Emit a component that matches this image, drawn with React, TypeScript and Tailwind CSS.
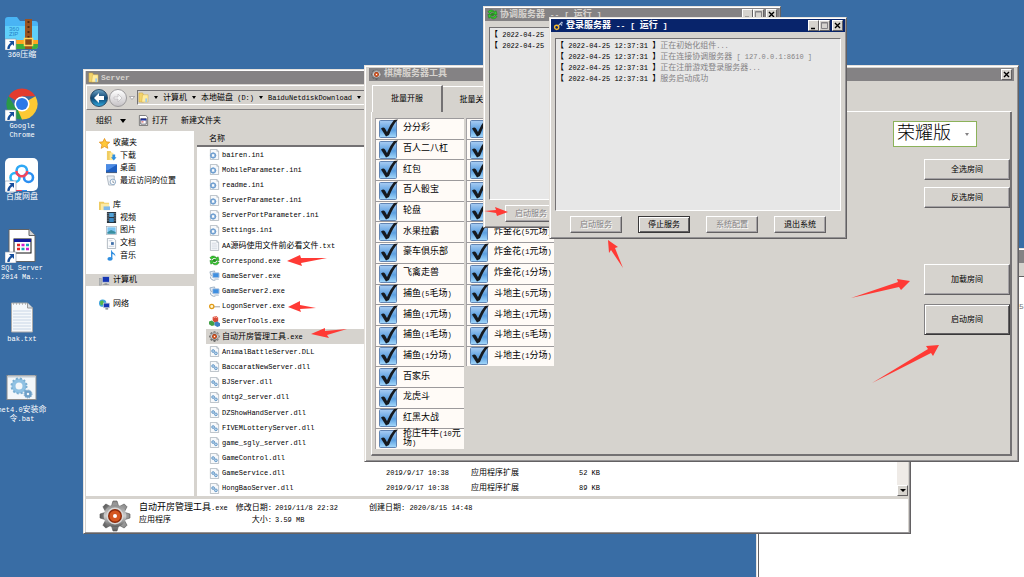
import { useState, type ReactNode } from "react"
import clsx from "clsx"

type FileKind = "ini" | "txt" | "correspond" | "server" | "key" | "tools" | "gear" | "dll"

interface FileItem {
  name: string
  kind: FileKind
  details?: [date: string, type: string, size: string]
}

const files: FileItem[] = [
  { name: "bairen.ini", kind: "ini" },
  { name: "MobileParameter.ini", kind: "ini" },
  { name: "readme.ini", kind: "ini" },
  { name: "ServerParameter.ini", kind: "ini" },
  { name: "ServerPortParameter.ini", kind: "ini" },
  { name: "Settings.ini", kind: "ini" },
  { name: "AA源码使用文件前必看文件.txt", kind: "txt" },
  { name: "Correspond.exe", kind: "correspond" },
  { name: "GameServer.exe", kind: "server" },
  { name: "GameServer2.exe", kind: "server" },
  { name: "LogonServer.exe", kind: "key" },
  { name: "ServerTools.exe", kind: "tools" },
  { name: "自动开房管理工具.exe", kind: "gear" },
  { name: "AnimalBattleServer.DLL", kind: "dll" },
  { name: "BaccaratNewServer.dll", kind: "dll" },
  { name: "BJServer.dll", kind: "dll" },
  { name: "dntg2_server.dll", kind: "dll" },
  { name: "DZShowHandServer.dll", kind: "dll" },
  { name: "FIVEMLotteryServer.dll", kind: "dll" },
  { name: "game_sgly_server.dll", kind: "dll" },
  { name: "GameControl.dll", kind: "dll" },
  { name: "GameService.dll", kind: "dll", details: ["2019/9/17 10:38", "应用程序扩展", "52 KB"] },
  { name: "HongBaoServer.dll", kind: "dll", details: ["2019/9/17 10:38", "应用程序扩展", "89 KB"] },
]

const games = [
  "分分彩", "百人二八杠", "红包", "百人骰宝", "轮盘", "水果拉霸", "豪车俱乐部", "飞禽走兽",
  "捕鱼(5毛场)", "捕鱼(1元场)", "捕鱼(1毛场)", "捕鱼(1分场)", "百家乐", "龙虎斗", "红黑大战", "抢庄牛牛(10元场)",
  "", "", "", "", "", "炸金花(5元场)", "炸金花(1元场)", "炸金花(1分场)",
  "斗地主(5元场)", "斗地主(1元场)", "斗地主(5毛场)", "斗地主(1分场)",
]

const logs = ["正在初始化组件...", "正在连接协调服务器 [ 127.0.0.1:8610 ]", "正在注册游戏登录服务器...", "服务启动成功"]

const RAISED = "border border-t-white border-l-white border-r-[#636163] border-b-[#636163] bg-[#d6d3ce]"
const SUNKEN = "border border-t-[#737173] border-l-[#737173] border-r-white border-b-white"

// Latin runs are set one size down so that they are half as wide as the Chinese ones
function T({ children }: { children: string }) {
  return (
    <>
      {children.split(/([\x20-\x7e]+)/).map((part, i) =>
        i % 2 ? <span key={i} className="text-[7px] leading-none [white-space-collapse:preserve]">{part}</span> : part
      )}
    </>
  )
}

/* ---------- icons ---------- */

function Folder() {
  return (
    <svg viewBox="0 0 12 12" className="size-[11px] shrink-0">
      <path d="M1 1h4l1 2v8H1z" fill="#f3d36b" stroke="#c9a132" strokeWidth=".5" />
      <path d="M5 3h6v8H4z" fill="#ffec9f" stroke="#d3ae45" strokeWidth=".5" />
      <path d="M8 7h2v4H8z" fill="#9fc9e8" />
    </svg>
  )
}

function ToolGear({ className }: { className: string }) {
  return (
    <svg viewBox="-16 -16 32 32" className={className}>
      <defs>
        <linearGradient id="steel" x1="0" y1="0" x2="0" y2="1">
          <stop offset="0" stopColor="#8b8b8b" />
          <stop offset=".5" stopColor="#cfcfcf" />
          <stop offset="1" stopColor="#5c5c5c" />
        </linearGradient>
      </defs>
      {[0, 45, 90, 135].map((a) => (
        <path key={a} d="M-2-15h4l1.500 5v20l-1.500 5h-4l-1.500-5v-20z" fill="url(#steel)" stroke="#555" strokeWidth=".6" transform={`rotate(${a})`} />
      ))}
      <circle r="11.3" fill="url(#steel)" />
      <circle r="8.5" fill="#d8d8d8" />
      <circle r="7" fill="#8b2a0b" />
      <circle r="5.6" fill="#d5561f" />
      <circle r="2" fill="#fff" />
    </svg>
  )
}

function Page({ children }: { children?: ReactNode }) {
  return (
    <svg viewBox="0 0 12 12" className="size-[11px] shrink-0">
      <path d="M1.500.5h7l2 2v9h-9z" fill="#f7f9fb" stroke="#9aa4ae" strokeWidth=".7" />
      <path d="M8.500.5v2h2" fill="#cdd5dc" stroke="#9aa4ae" strokeWidth=".5" />
      {children}
    </svg>
  )
}

function FileIcon({ kind }: { kind: FileKind }) {
  switch (kind) {
    case "ini":
      return (
        <Page>
          <circle cx="4.500" cy="7" r="2.500" fill="none" stroke="#6f9fd0" strokeWidth="1.600" />
          <path d="M4.500 3.500v7M1 7h7" stroke="#6f9fd0" strokeWidth=".8" />
          <circle cx="4.500" cy="7" r="1.200" fill="#fff" />
        </Page>
      )
    case "txt":
      return <Page><path d="M3 3.500h5M3 5.500h6M3 7.500h6M3 9.500h6" stroke="#b9c3d2" strokeWidth=".6" /></Page>
    case "dll":
      return (
        <Page>
          <circle cx="4.500" cy="5.500" r="1.500" fill="#bcd8ee" stroke="#5f93c4" />
          <circle cx="7.500" cy="8" r="1.500" fill="#bcd8ee" stroke="#5f93c4" />
        </Page>
      )
    case "correspond":
      return <Recycle />
    case "server":
      return (
        <svg viewBox="0 0 12 12" className="size-[11px] shrink-0">
          <path d="M1 2l5-1 1 4-5 1z" fill="#dfe9f3" stroke="#7b93ad" strokeWidth=".7" />
          <rect x="4" y="3" width="7" height="5.500" rx=".7" fill="#3f8fe0" stroke="#b9cbe0" />
          <path d="M2 7a4 3 0 0 0 5 4" fill="none" stroke="#8aa0b6" />
          <path d="M6 9h4l1 2H6z" fill="#c8d4e0" />
        </svg>
      )
    case "key":
      return (
        <svg viewBox="0 0 12 12" className="size-[11px] shrink-0">
          <path d="M5 5.500h7v1.500H5z" fill="#b9b9b9" />
          <circle cx="3" cy="6" r="2.300" fill="#fff6d0" stroke="#e09a17" strokeWidth="1.400" />
        </svg>
      )
    case "tools":
      return (
        <svg viewBox="0 0 12 12" className="size-[11px] shrink-0">
          <path d="M4 1l4-1 2 2v4l-4 1-2-2z" fill="#d94b38" />
          <path d="M0 6l3-1 3 2v3l-3 1-3-2z" fill="#42a047" />
          <path d="M6 7l3-1 3 2v3l-3 1-3-2z" fill="#3f7fc4" />
          <path d="M5 2l2-1 2 1" stroke="#ffb1a5" fill="none" />
        </svg>
      )
    default:
      return <ToolGear className="size-[11px] shrink-0" />
  }
}

function Recycle() {
  return (
    <svg viewBox="0 0 12 12" className="size-[11px] shrink-0">
      <path d="M1 3c2-3 6-2 7 0l2-1 1 4H7l1-2C6 2 4 3 3 5z" fill="#35c92f" stroke="#14730f" strokeWidth=".5" />
      <path d="M11 8c-2 4-6 3-7 1l-2 1-1-4h4L4 8c2 2 4 1 5-1z" fill="#35c92f" stroke="#14730f" strokeWidth=".5" />
      <circle cx="6" cy="6" r="1.800" fill="#25911f" />
    </svg>
  )
}

function KeyIcon() {
  return (
    <svg viewBox="0 0 12 12" className="size-[11px] shrink-0">
      <path d="M5 7l5-5M8 4l2 2M9.500 2.500l1 1" stroke="#b5c3dc" strokeWidth="1.300" />
      <circle cx="4" cy="8" r="2.300" fill="none" stroke="#f4b92f" strokeWidth="1.500" />
    </svg>
  )
}

function Shortcut() {
  return (
    <g>
      <rect x="0" y="23" width="11" height="11" fill="#fff" stroke="#8795a8" strokeWidth=".6" />
      <path d="M4 25h5v5l-1.700-1.700Q4.500 30 4.500 33H2.300q0-4 3.500-6.200z" fill="#174f9c" />
    </g>
  )
}

function SideIcon({ name }: { name: string }) {
  const art: Record<string, ReactNode> = {
    收藏夹: <path d="M6 .5l1.700 3.700 4 .4-3 2.700.9 4L6 9.300l-3.600 2 .9-4-3-2.700 4-.4z" fill="#ffc83a" stroke="#e08a12" strokeWidth=".8" />,
    下载: <><path d="M1 1h4l1 2v8H1z" fill="#f0cd62" /><path d="M4 3h4v8H4z" fill="#ffe794" /><path d="M7 5h3v3h1.500L8.500 11.500 5.500 8H7z" fill="#2f8fe0" /></>,
    桌面: <><rect x="0" y="1.500" width="12" height="8.500" fill="#1f5fc0" /><path d="M0 1.500h12L2 8H0z" fill="#4b8be6" /><path d="M0 10h12v1H0z" fill="#27456f" /></>,
    最近访问的位置: <><path d="M1 1h8v10H3z" fill="#e8edf2" stroke="#8f9ba8" strokeWidth=".7" /><circle cx="7.500" cy="7.500" r="3" fill="#fff" stroke="#8aa6c4" /><path d="M7.500 6v2H9" stroke="#567" strokeWidth=".7" fill="none" /></>,
    库: <><path d="M0 2h5l1 1h5v8H0z" fill="#eecb62" /><path d="M2 4h9v7H2z" fill="#fdeaa5" /><path d="M5 7h7v4H5z" fill="#7fb8ea" /></>,
    视频: <><rect x="1" y="0" width="10" height="12" fill="#26303a" /><rect x="3.500" y="1" width="5" height="4.500" fill="#52a3d8" /><rect x="3.500" y="6.500" width="5" height="4.500" fill="#3b89c4" /><path d="M2.200 1v10M9.800 1v10" stroke="#dfe5ea" strokeWidth=".8" strokeDasharray="1 1" /></>,
    图片: <><rect x=".5" y="1.500" width="11" height="9" fill="#fff" stroke="#9aa7b4" strokeWidth=".7" /><rect x="1.500" y="2.500" width="9" height="7" fill="#7cc4f2" /><path d="M1.500 8l4-2.500 5 2v2h-9z" fill="#3a8fa0" /></>,
    文档: <><path d="M1.500 .5h7l2 2v9h-9z" fill="#fbfcfd" stroke="#9aa4ae" strokeWidth=".8" /><path d="M3 3h4M3 9h6" stroke="#a9b6c6" strokeWidth=".7" /><rect x="5.500" y="4.500" width="3" height="3" fill="#3e6ea8" /></>,
    音乐: <><path d="M6 0c0 3 5 3 4 7-.6-2-2-2.500-3-2.600V10H5.500V0z" fill="#2f8ee0" /><ellipse cx="4.300" cy="9.700" rx="2.800" ry="2" fill="#2f8ee0" /></>,
    计算机: <><rect x="0" y="4" width="2.500" height="7" fill="#b5b8bb" stroke="#83878a" strokeWidth=".5" /><rect x="3.500" y="1.500" width="8" height="6.500" fill="#1636b4" stroke="#c8cdd3" /><path d="M6 9h3v1h2v1H4v-1h2z" fill="#8e9499" /></>,
    网络: <><circle cx="4" cy="4.500" r="4" fill="#3fa4dd" /><path d="M1 3q3-3 4 0T2 7z" fill="#57b947" /><rect x="5" y="4.500" width="6.500" height="5" fill="#1636b4" stroke="#c8cdd3" strokeWidth=".8" /><path d="M7 10h3v1.500H7z" fill="#7c8287" /></>,
  }
  return <svg viewBox="0 0 12 12" className="size-[11px] shrink-0">{art[name]}</svg>
}

function CheckMark() {
  return (
    <svg viewBox="0 0 20 20" className="size-[20px]">
      <defs>
        <linearGradient id="box" x1="0" y1="0" x2="0" y2="1">
          <stop offset="0" stopColor="#a9cdf3" />
          <stop offset=".55" stopColor="#5b9fe0" />
          <stop offset="1" stopColor="#a5d9fb" />
        </linearGradient>
      </defs>
      <rect x="1.500" y="1.500" width="17" height="17" rx="1" fill="url(#box)" stroke="#6285b3" />
      <path className="hidden [input:checked+svg_&]:block" d="M3 9.500q2.500-2 4 0l2 3.500q3-7.500 7-12l4-.5q-5.500 5.500-9 15.500l-3 1.500z" fill="#161a1f" />
    </svg>
  )
}

/* ---------- desktop ---------- */

const shortcuts: { label: string[]; art: ReactNode }[] = [
  {
    label: ["360压缩"],
    art: (
      <>
        <path d="M0 4q0-3 3-3h9l3 4h15q3 0 3 3v22q0 3-3 3H3q-3 0-3-3z" fill="#49b4f4" />
        <path d="M0 10h33v14H0z" fill="#5fd0fb" />
        <path d="M0 24h33v4H0z" fill="#ffa51f" />
        <path d="M0 28h33v2q0 3-3 3H3q-3 0-3-3z" fill="#3fae3c" />
        <path d="M20 3h7v30h-7z" fill="#9a5320" />
        <path d="M23.500 5v17" stroke="#4e2a10" strokeWidth="2" strokeDasharray="2 3" />
        <rect x="19.500" y="22.500" width="8" height="7" fill="#8a4a18" stroke="#ffd65c" strokeWidth="1.500" />
        <text x="4" y="15" fontSize="6" fill="#2480c8" fontFamily="Liberation Sans">360</text>
        <text x="4" y="20" fontSize="6" fill="#2480c8" fontFamily="Liberation Sans">ZIP</text>
      </>
    ),
  },
  {
    label: ["Google", "Chrome"],
    art: (
      <>
        <path d="M17 17L3.600 9.200A15.500 15.500 0 0 1 30.400 9.200H17z" fill="#e33b2e" />
        <path d="M17 17L30.400 9.200A15.500 15.500 0 0 1 17 32.500l-2-4z" fill="#fcc934" />
        <path d="M17 17v15.500A15.500 15.500 0 0 1 3.600 9.200L10 20z" fill="#2a9a48" />
        <path d="M17 17h8l-8 15.500-4-9z" fill="#fcc934" />
        <circle cx="17" cy="17" r="7.600" fill="#fff" />
        <circle cx="17" cy="17" r="6" fill="#2b79e8" />
      </>
    ),
  },
  {
    label: ["百度网盘"],
    art: (
      <>
        <rect x="0" y="0" width="33" height="33" rx="5" fill="#fff" />
        <circle cx="10" cy="19.500" r="4.500" fill="none" stroke="#29b6f6" strokeWidth="2.600" />
        <circle cx="23.500" cy="19.500" r="4.500" fill="none" stroke="#2b8ff2" strokeWidth="2.600" />
        <path d="M11.500 13a5.300 5.300 0 0 1 10.600 0" fill="none" stroke="#2fa8f5" strokeWidth="2.600" />
        <path d="M11.500 13a5.300 5.300 0 0 0 10.600 0" fill="none" stroke="#f3455c" strokeWidth="2.600" />
        <path d="M11 32h6v1h-6z" fill="#f3455c" />
        <path d="M17 32h5v1h-5z" fill="#2b8ff2" />
      </>
    ),
  },
  {
    label: ["SQL Server", "2014 Ma..."],
    art: (
      <>
        <path d="M4 .5h20l6 6v26H4z" fill="#fff" stroke="#636363" />
        <path d="M24 .5v6h6" fill="#d5d5d5" stroke="#636363" />
        <rect x="9" y="10" width="17" height="14" fill="#fff" stroke="#111" />
        <path d="M9 10h17v3H9z" fill="#101c9c" />
        <path d="M12 16h3M12 20h3" stroke="#e02424" strokeWidth="2.500" />
        <path d="M16.500 16h3M21 20h3" stroke="#d11fd1" strokeWidth="2.500" />
        <path d="M21 16h3M16.500 20h3" stroke="#16a5b8" strokeWidth="2.500" />
      </>
    ),
  },
  {
    label: ["bak.txt"],
    art: (
      <>
        <path d="M6.500 3h16l5 5v24h-21z" fill="#f5f8fb" stroke="#a9a9a9" />
        <path d="M22.500 3v5h5" fill="#d7dde3" stroke="#9a9a9a" />
        <path d="M8 11h18M8 14h18M8 17h18M8 20h18M8 23h18M8 26h18M8 29h18" stroke="#c9d6e6" />
        <path d="M8 4h14" stroke="#8b8b8b" strokeDasharray="1 2" />
      </>
    ),
  },
  {
    label: ["net4.0安装命", "令.bat"],
    art: (
      <>
        <rect x="2" y="4.500" width="29" height="24" fill="#f3f7fa" stroke="#8c8c8c" />
        <path d="M3 5.500h27" stroke="#c5ccd3" strokeWidth="2" />
        <circle cx="14" cy="15" r="5.500" fill="none" stroke="#8fc1e3" strokeWidth="4" />
        <circle cx="14" cy="15" r="7.500" fill="none" stroke="#7aaed2" strokeWidth="2" strokeDasharray="2 2" />
        <circle cx="23" cy="23" r="2.500" fill="none" stroke="#6d9fc7" strokeWidth="2.500" />
        <circle cx="23" cy="23" r="4" fill="none" stroke="#6d9fc7" strokeDasharray="1 1" />
      </>
    ),
  },
]

function DesktopIcons() {
  return (
    <div className="flex w-11 flex-col pt-4">
      {shortcuts.map((s, i) => (
        <div key={s.label[0]} className="flex h-[71px] flex-col items-center text-center leading-[9px] whitespace-nowrap text-white">
          <svg viewBox="0 0 34 34" className="size-[34px] shrink-0">
            {s.art}
            {i < 4 && <Shortcut />}
          </svg>
          {s.label.map((line) => <span key={line}><T>{line}</T></span>)}
        </div>
      ))}
    </div>
  )
}

/* ---------- window parts ---------- */

function Caption({ kind }: { kind: "min" | "max" | "close" }) {
  return (
    <button aria-label={kind} disabled={kind === "max"} className={clsx("grid size-[11px] place-items-center", RAISED, kind === "close" && "ml-[2px]")}>
      <svg viewBox="0 0 9 9" className="size-[9px]" fill="none" stroke={kind === "max" ? "#848284" : "#000"}>
        {kind === "min" && <path d="M2 7.500h4" strokeWidth="1.500" />}
        {kind === "max" && <path d="M1.500 1.500h6v6h-6zM1.500 2h6" />}
        {kind === "close" && <path d="M2 2l5 5M7 2L2 7" strokeWidth="1.400" />}
      </svg>
    </button>
  )
}

function TitleBar({ icon, title, active, buttons = [] }: { icon: ReactNode; title: string; active?: boolean; buttons?: ("min" | "max" | "close")[] }) {
  return (
    <div className={clsx("flex h-[13px] shrink-0 items-center gap-[2px] px-[2px] text-[9px] leading-[13px] font-bold whitespace-nowrap", active ? "bg-[#08246b] text-white" : "bg-[#848284] text-[#d6d3ce]")}>
      {icon}
      <span className="flex-1 whitespace-pre">
        {title.split(/([\x20-\x7e]+)/).map((p, i) => (i % 2 ? <span key={i} className="text-[8px]">{p}</span> : p))}
      </span>
      <span className="flex">{buttons.map((b) => <Caption key={b} kind={b} />)}</span>
    </div>
  )
}

function Window({ className, children }: { className: string; children: ReactNode }) {
  return (
    <section className={clsx("absolute flex flex-col border border-t-[#e7e3de] border-l-[#e7e3de] border-r-[#636163] border-b-[#636163] bg-[#d6d3ce] p-px shadow-[inset_1px_1px_0_#fff,inset_-1px_-1px_0_#949294]", className)}>
      {children}
    </section>
  )
}

function PushButton({ children, className, strong, disabled }: { children: string; className: string; strong?: boolean; disabled?: boolean }) {
  return (
    <button
      disabled={disabled}
      className={clsx("shrink-0 bg-[#d6d3ce] text-center text-[8px] whitespace-nowrap", className,
        disabled && "text-[#848284] [text-shadow:1px_1px_0_#fff]",
        strong ? "border border-[#393839] shadow-[inset_1px_1px_0_#fff,inset_-1px_-1px_0_#636163]" : "border border-t-white border-l-white border-r-[#636163] border-b-[#636163] shadow-[inset_-1px_-1px_0_#a5a2a5]")}
    >
      {children}
    </button>
  )
}

/* ---------- windows ---------- */

function Crumb({ children }: { children: string }) {
  return (
    <span className="flex items-center gap-[5px]">
      <i className="border-x-2 border-t-[3px] border-x-transparent border-t-black" />
      <span><T>{children}</T></span>
    </span>
  )
}

function SideGroup({ items, className }: { items: string[]; className: string }) {
  return (
    <ul className={clsx("grid auto-rows-fr", className)}>
      {items.map((name, i) => (
        <li key={name} className={clsx("flex items-center gap-[3px] leading-[12px]", i === 0 ? "pl-[13px]" : "pl-[20px]")}>
          <SideIcon name={name} />
          {name}
        </li>
      ))}
    </ul>
  )
}

function Explorer() {
  return (
    <Window className="top-[69px] left-[83px] h-[465px] w-[828px] px-[2px]">
      <TitleBar icon={<Folder />} title="Server" />
      <nav className="mt-px flex h-[25px] shrink-0 items-center border border-t-white border-l-white border-r-[#848284] border-b-[#848284] pl-[3px]">
        <button aria-label="后退" className="grid size-[18px] place-items-center rounded-full border border-[#2a4b66] bg-linear-to-b from-[#6aa3c4] via-[#0d4672] to-[#2fa6dc]">
          <svg viewBox="0 0 12 12" className="size-3"><path d="M6 1L1 6l5 5V8h5V4H6z" fill="#fff" /></svg>
        </button>
        <button aria-label="前进" className="ml-px grid size-[18px] place-items-center rounded-full border border-[#9c9a9c] bg-linear-to-b from-white to-[#c6c3c6]">
          <svg viewBox="0 0 12 12" className="size-3"><path d="M6 2l4 4-4 4V7H2V5h4z" fill="#f7f7f7" stroke="#b5b2b5" strokeWidth=".6" /></svg>
        </button>
        <svg viewBox="0 0 6 4" className="mx-[2px] h-1 w-[6px]"><path d="M.5.5h5L3 3.500z" fill="#fff" stroke="#848284" strokeWidth=".6" /></svg>
        <div className={clsx("flex h-[15px] flex-1 items-center gap-[5px] overflow-hidden whitespace-nowrap", SUNKEN)}>
          <Folder />
          <Crumb>计算机</Crumb>
          <Crumb>本地磁盘 (D:)</Crumb>
          <Crumb>BaiduNetdiskDownload</Crumb>
          <Crumb>微</Crumb>
        </div>
      </nav>
      <div className="flex h-[21px] shrink-0 items-center pl-[10px]">
        <button className="flex items-center gap-2">
          组织
          <i className="border-x-[3px] border-t-4 border-x-transparent border-t-black" />
        </button>
        <button className="ml-3 flex items-center gap-[3px]">
          <svg viewBox="0 0 12 12" className="size-[11px]">
            <path d="M1.500.5h7l2 2v9h-9z" fill="#fff" stroke="#555" strokeWidth=".8" />
            <path d="M3 4h6v6H3z" fill="#fff" stroke="#223" strokeWidth=".7" />
            <path d="M3 4h6v2H3z" fill="#1a2b9c" />
            <path d="M4 7.500h2" stroke="#c33" />
          </svg>
          打开
        </button>
        <button className="ml-[13px]">新建文件夹</button>
      </div>
      <div className="flex min-h-0 flex-1 bg-white">
        <aside className="flex w-[111px] shrink-0 flex-col border-r-[3px] border-[#d6d3ce] pt-[6px]">
          <SideGroup className="h-[50px]" items={["收藏夹", "下载", "桌面", "最近访问的位置"]} />
          <SideGroup className="mt-3 h-[63px]" items={["库", "视频", "图片", "文档", "音乐"]} />
          <SideGroup className="mt-3 h-3 bg-[#d6d3ce]" items={["计算机"]} />
          <SideGroup className="mt-3 h-3" items={["网络"]} />
        </aside>
        <div className="flex min-w-0 flex-1 flex-col">
          <div className="h-[16px] shrink-0 border-b-2 border-[#737173] bg-[#d6d3ce] pl-3 leading-[15px]">名称</div>
          <div className="min-h-0 flex-1 pl-[9px]">
            <table className="h-full w-full table-fixed border-collapse leading-[12px]">
              <colgroup>
                <col className="w-[180px]" />
                <col className="w-[85px]" />
                <col className="w-[80px]" />
                <col className="w-[49px]" />
                <col />
              </colgroup>
              <tbody>
                {files.map((f) => (
                  <tr key={f.name} className={clsx("align-middle", f.kind === "gear" && "bg-[#d6d3ce]")}>
                    <td className="pl-[3px]">
                      <div className="flex items-center gap-[2px]"><FileIcon kind={f.kind} /><span><T>{f.name}</T></span></div>
                    </td>
                    <td><T>{f.details?.[0] ?? ""}</T></td>
                    <td>{f.details?.[1]}</td>
                    <td className="text-right"><T>{f.details?.[2] ?? ""}</T></td>
                    <td />
                  </tr>
                ))}
              </tbody>
            </table>
          </div>
        </div>
        <div className="flex w-[11px] shrink-0 flex-col justify-end bg-[#efebe7]">
          <button aria-label="向下滚动" className={clsx("grid size-[11px] place-items-center", RAISED)}>
            <i className="border-x-[3px] border-t-[3px] border-x-transparent border-t-black" />
          </button>
        </div>
      </div>
      <footer className="mt-[3px] flex h-[33px] shrink-0 bg-white pl-[13px] leading-3">
        <ToolGear className="mt-px size-[32px]" />
        <div className="ml-2 pt-[3px]">
          <p className="h-3 w-[95px] text-[9px] whitespace-nowrap"><T>自动开房管理工具.exe</T></p>
          <p>应用程序</p>
        </div>
        <dl className="grid w-[135px] grid-cols-[38px_1fr] content-start gap-x-[3px] pt-[3px] whitespace-nowrap">
          <dt className="text-right"><T>修改日期:</T></dt>
          <dd><T>2019/11/8 22:32</T></dd>
          <dt className="text-right"><T>大小:</T></dt>
          <dd><T>3.59 MB</T></dd>
        </dl>
        <p className="pt-[3px]"><T>创建日期: 2020/8/15 14:48</T></p>
      </footer>
    </Window>
  )
}

function RoomTool() {
  const [checked, setChecked] = useState(() => games.map(() => true))
  const toggle = (i: number) => setChecked((prev) => prev.map((v, n) => (n === i ? !v : v)))

  return (
    <Window className="top-[65px] left-[364px] h-[397px] w-[655px]">
      <div className="px-[3px] pt-px">
        <TitleBar icon={<ToolGear className="size-[11px]" />} title="棋牌服务器工具" buttons={["close"]} />
      </div>
      <div role="tablist" className="mx-[6px] mt-1 flex h-[27px] items-end">
        <button role="tab" aria-selected className="h-[27px] w-[71px] border-t border-r-2 border-l border-t-white border-r-[#737173] border-l-white">批量开服</button>
        <button role="tab" className="h-[26px] w-[71px] border-t border-r-2 border-t-white border-r-[#737173] pr-1">批量关服</button>
        <span className="flex-1 self-stretch border-b border-white" />
      </div>
      <div className="mx-[5px] mb-1 flex flex-1 items-start justify-between border-r-2 border-b-2 border-l border-r-[#737173] border-b-[#737173] border-l-white pt-[6px] pl-[3px]">
        <div className="grid h-[331px] grid-flow-col grid-cols-[89px_88px] grid-rows-[repeat(16,minmax(0,1fr))] gap-x-[2px]">
          {games.map((g, i) => (
            <label key={i} className="relative flex items-center border-t border-l border-t-[#9c9a9c] border-l-[#a5a2a5] bg-[#fffbf7] pl-[2px] text-[9px] leading-[9px]">
              <input type="checkbox" checked={checked[i]} onChange={() => toggle(i)} className="absolute inset-0 size-full opacity-0" />
              <CheckMark />
              <span className="ml-[5px] flex-1"><T>{g}</T></span>
            </label>
          ))}
        </div>
        <div className="flex flex-col items-end pt-[3px]">
          <div className="relative mr-[33px] mb-3 h-[26px] w-[84px]">
            <select aria-label="版本" className="size-full appearance-none border border-[#8cb25a] bg-white pl-[3px] text-[18px] leading-[22px] font-light">
              <option>荣耀版</option>
            </select>
            <i className="pointer-events-none absolute top-3 right-2 border-x-2 border-t-[3px] border-x-transparent border-t-[#848284]" />
          </div>
          <PushButton className="h-[21px] w-[86px]">全选房间</PushButton>
          <PushButton className="mt-[7px] h-[21px] w-[86px]">反选房间</PushButton>
          <PushButton className="mt-14 h-[31px] w-[86px]">加载房间</PushButton>
          <PushButton strong className="mt-[9px] h-[31px] w-[86px] border-t-[#848284] border-l-[#848284]">启动房间</PushButton>
        </div>
      </div>
    </Window>
  )
}

function CoordServer() {
  return (
    <Window className="top-[6px] left-[483px] h-[222px] w-[298px]">
      <TitleBar icon={<Recycle />} title="协调服务器 -- [ 运行 ]" buttons={["min", "max", "close"]} />
      <ul className={clsx("mx-1 mt-[6px] h-[173px] bg-[#e7e7e7] pt-px leading-[11px]", SUNKEN)}>
        <li><T>{"【 2022-04-25"}</T></li>
        <li><T>{"【 2022-04-25"}</T></li>
      </ul>
      <div className="mt-[5px] flex pl-5">
        <PushButton disabled className="h-[17px] w-[52px]">启动服务</PushButton>
      </div>
    </Window>
  )
}

function LogonServer() {
  return (
    <Window className="top-[17px] left-[549px] h-[222px] w-[298px]">
      <TitleBar active icon={<KeyIcon />} title="登录服务器 -- [ 运行 ]" buttons={["min", "max", "close"]} />
      <ul className={clsx("mx-1 mt-[6px] h-[173px] bg-[#e7e7e7] pt-px leading-[11px] whitespace-nowrap", SUNKEN)}>
        {logs.map((l) => (
          <li key={l}>
            <T>{"【 2022-04-25 12:37:31 】"}</T>
            <span className="text-[#848284]"><T>{l}</T></span>
          </li>
        ))}
      </ul>
      <div className="mt-[5px] flex gap-4 pl-[19px]">
        <PushButton disabled className="h-[17px] w-[52px]">启动服务</PushButton>
        <PushButton strong className="h-[17px] w-[52px]">停止服务</PushButton>
        <PushButton disabled className="h-[17px] w-[52px]">系统配置</PushButton>
        <PushButton className="h-[17px] w-[52px]">退出系统</PushButton>
      </div>
    </Window>
  )
}

const arrows = [
  "287,261 300,255 301,258 327,258 301,263 302,266",
  "288,307 300,301 300,305 316,308 300,309 301,312",
  "311,334 325,328 325,331 347,329 327,335 329,338",
  "508,212 495,207 496,210 484,211 496,213 497,216",
  "608,240 618,247 615,248 623,268 611,250 609,253",
  "910,281 897,279 898,282 851,298 899,287 901,290",
  "939,345 926,346 928,349 872,383 931,353 933,356",
]

export default function App() {
  return (
    <main className="relative min-h-screen w-full overflow-hidden bg-[#396da5] text-[8px] text-black [font-family:'Liberation_Mono','Noto_Sans_CJK_SC',monospace]">
      <DesktopIcons />
      <Window className="top-[248px] -right-2 -bottom-2 left-[756px]">
        <div className="h-[13px] bg-[#848284]" />
        <div className="h-[13px]" />
        <div className="flex-1 border-t border-l border-[#636163] bg-white pt-[24px] pl-[260px] text-[#737173]">5</div>
      </Window>
      <Explorer />
      <RoomTool />
      <CoordServer />
      <LogonServer />
      <svg className="pointer-events-none absolute top-0 left-0 h-[400px] w-[1000px]" fill="#ff3a35">
        {arrows.map((p) => <polygon key={p} points={p} />)}
      </svg>
    </main>
  )
}
